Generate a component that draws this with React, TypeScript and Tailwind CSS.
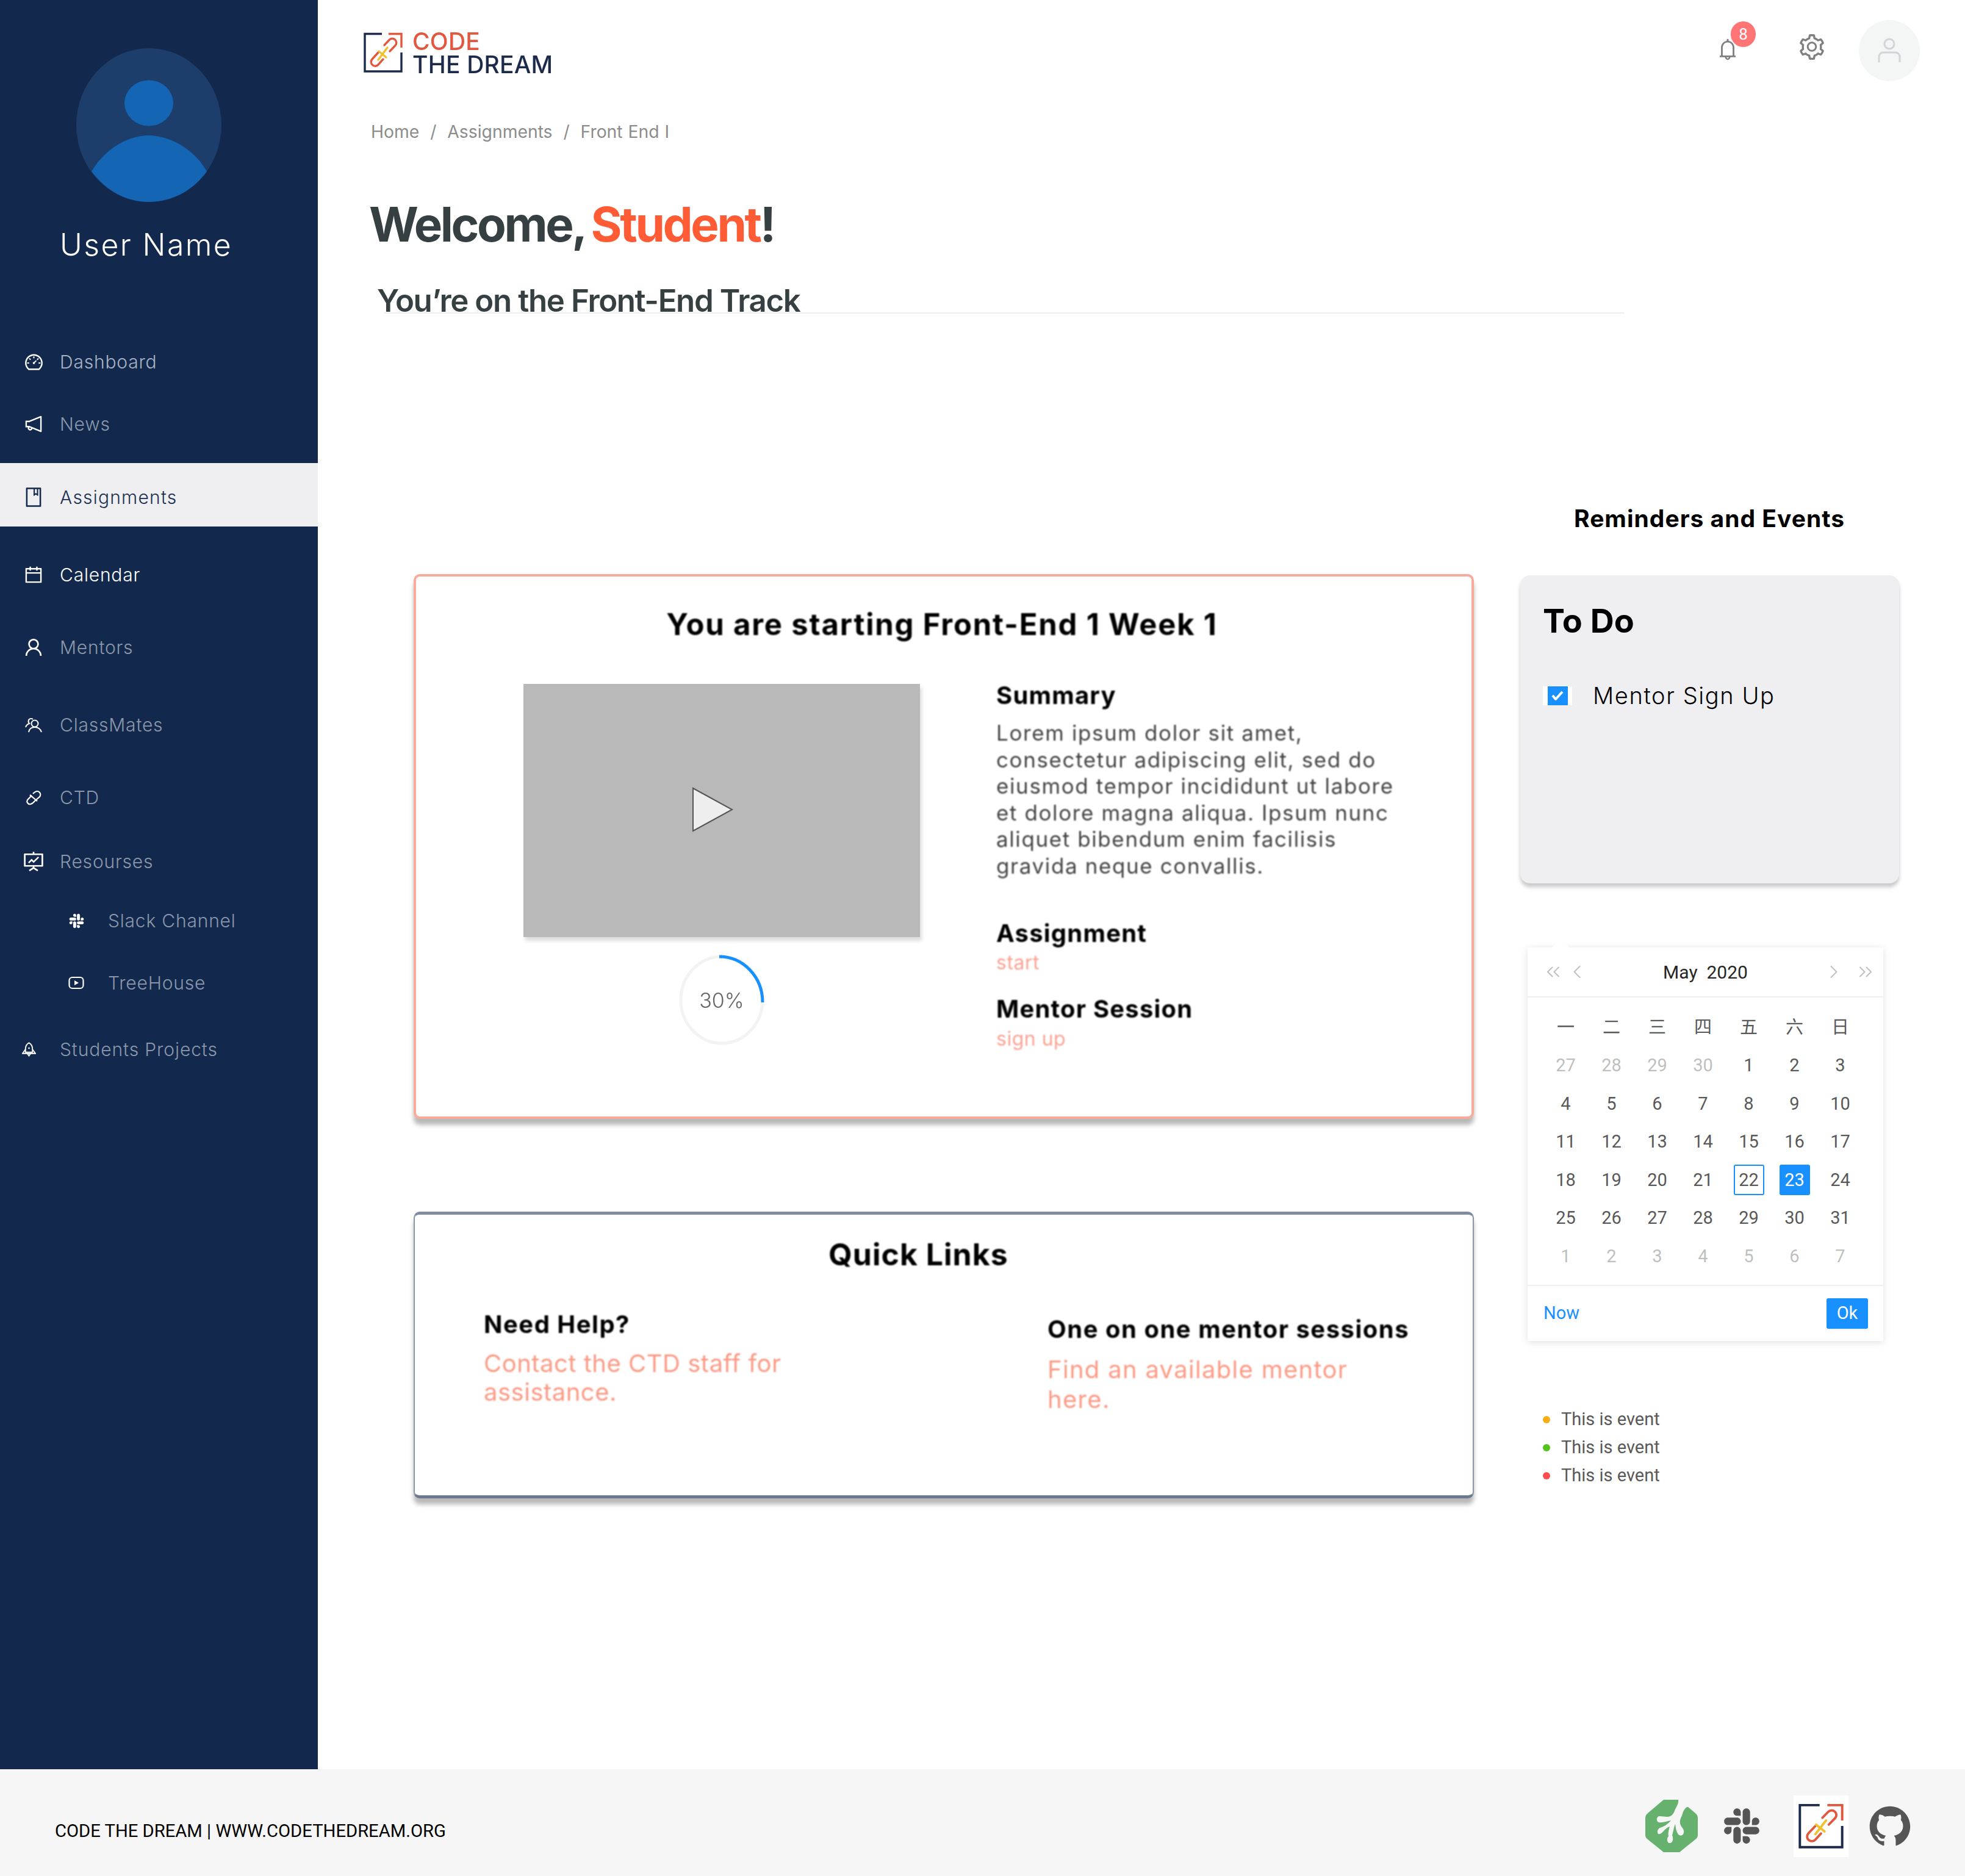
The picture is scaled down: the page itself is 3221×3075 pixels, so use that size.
import React from "react";
import {
  AiOutlineDashboard, AiOutlineNotification, AiOutlineBook, AiOutlineCalendar, AiOutlineUser,
  AiOutlineFundProjectionScreen, AiOutlineSetting, AiFillGithub, AiOutlineBell,
} from "react-icons/ai";
import { FaSlack } from "react-icons/fa";
import { LuChevronLeft, LuChevronRight, LuChevronsLeft, LuChevronsRight } from "react-icons/lu";

const sans = "font-['Inter','Noto_Sans',sans-serif]";
const rob = "font-['Roboto','Noto_Sans_CJK_SC',sans-serif]";

function TeamIcon() {
  return (
    <svg viewBox="0 0 28 26" className="w-[28px] h-[26px] shrink-0" fill="none" stroke="white" strokeWidth="2">
      <circle cx="16" cy="11" r="5.5" />
      <path d="M6 25c1-6 5-8 10-8s9 2 11 8" />
      <path d="M13 4a5 5 0 0 0-7 1c-1 3 0 5 1 6-3 1-5 3-6 6" />
    </svg>
  );
}
function CtdIcon() {
  return (
    <svg viewBox="0 0 28 26" className="w-[28px] h-[26px] shrink-0" fill="none" stroke="white" strokeWidth="2.2">
      <path d="M11 10 5 16c-4 4 0 9 4 8 3 0 5-3 8-6l7-6c3-4 0-9-4-9-3 0-5 2-7 4" />
      <path d="M8 9c4 3 8 7 12 10" />
    </svg>
  );
}
function RocketIcon() {
  return (
    <svg viewBox="0 0 24 26" className="w-[23px] h-[26px] shrink-0" fill="none" stroke="white" strokeWidth="2">
      <path d="M12 2c4 2 6 6 6 11v5H6v-5c0-5 2-9 6-11Z" />
      <path d="M6 13 1 20h22l-5-7M9 20l3 4 3-4" />
      <circle cx="12" cy="11" r="1.4" fill="white" stroke="none" />
    </svg>
  );
}
function TreeHouseNavIcon() {
  return (
    <svg viewBox="0 0 26 24" className="w-[26px] h-[24px] shrink-0" fill="none" stroke="white" strokeWidth="2.2">
      <rect x="1.5" y="3" width="23" height="18" rx="5" />
      <path d="M10 8v8l7-4Z" fill="white" stroke="none" />
    </svg>
  );
}
function LogoMark({ className }: { className: string }) {
  return (
    <svg viewBox="0 0 64 66" className={className} fill="none" preserveAspectRatio="none">
      <path d="M30 2.5H2V64H62V33" stroke="#1c2b4a" strokeWidth="3.4" />
      <path d="M41 2.5H62V25" stroke="#e2573e" strokeWidth="3.4" />
      <path d="M34 21 42 12.500a6.500 6.500 0 0 1 10 9L43 31" stroke="#e2573e" strokeWidth="3.400" strokeLinecap="round" />
      <path d="M24 33 14 44a6.500 6.500 0 0 0 10 9L32 44" stroke="#e2573e" strokeWidth="3.400" strokeLinecap="round" />
      <path d="M24 45 39 25M25 31 37 41" stroke="#efc12f" strokeWidth="3.400" strokeLinecap="round" />
    </svg>
  );
}
function TreeHouseLogo() {
  return (
    <svg viewBox="0 0 86 86" className="w-[86px] h-[86px] shrink-0">
      <path d="M30 0H56L82 22Q86 25 86 30V58Q86 62 82 65L56 86H30L4 65Q0 62 0 58V30Q0 25 4 22Z" fill="#66b16e" />
      <path
        d="M54-1C55 8 50 12 48 18 46 24 42 28 36 28L24 27C18 26 17 36 22 37 30 38 35 35 42 34 36 41 30 44 24 46 18 49 19 58 24 56 30 54 32 46 40 44 38 50 37 56 38 60 34 64 36 72 41 71 46 70 46 62 44 58 46 52 47 44 49 40 50 46 50 50 53 55 55 60 62 60 63 54 64 48 60 46 58 42 55 36 58 30 60 26 62 18 66 10 72 12L62-1Z"
        fill="#f6f6f6"
      />
    </svg>
  );
}

type NavRow = { label: string; icon: React.ReactNode; cls: string; text: string };
const top = "pl-[40px]";
const nav: NavRow[] = [
  { label: "Dashboard", icon: <AiOutlineDashboard size={33} color="white" className="shrink-0" />, cls: `h-[100px] ${top}`, text: "text-[#a9b3c3] ml-[28px]" },
  { label: "News", icon: <AiOutlineNotification size={34} color="white" className="shrink-0" />, cls: `h-[104px] mb-[12px] ${top}`, text: "text-[#8b97ab] ml-[28px]" },
  { label: "Assignments", icon: <AiOutlineBook size={36} color="#12284c" className="shrink-0" />, cls: `h-[104px] pt-[8px] bg-[#efeff2] ${top}`, text: "text-[#1c2f50] ml-[28px] tracking-[1.2px]" },
  { label: "Calendar", icon: <AiOutlineCalendar size={34} color="white" className="shrink-0" />, cls: `h-[158px] ${top}`, text: "text-white ml-[28px]" },
  { label: "Mentors", icon: <AiOutlineUser size={36} color="white" className="shrink-0" />, cls: `h-[80px] ${top}`, text: "text-[#8b97ab] ml-[28px]" },
  { label: "ClassMates", icon: <TeamIcon />, cls: `h-[174px] ${top}`, text: "text-[#8b97ab] ml-[28px] tracking-[0.4px]" },
  { label: "CTD", icon: <CtdIcon />, cls: `h-[64px] ${top}`, text: "text-[#8b97ab] ml-[28px]" },
  { label: "Resourses", icon: <AiOutlineFundProjectionScreen size={38} color="white" className="shrink-0" />, cls: `h-[146px] ${top}`, text: "text-[#8b97ab] ml-[28px] tracking-[0.6px]" },
  { label: "Slack Channel", icon: <FaSlack size={27} color="white" className="shrink-0" />, cls: "h-[48px] pl-[110px]", text: "text-[#8b97ab] ml-[37px]" },
  { label: "TreeHouse", icon: <TreeHouseNavIcon />, cls: "h-[156px] pl-[110px]", text: "text-[#8b97ab] ml-[37px] tracking-[0.6px]" },
  { label: "Students Projects", icon: <RocketIcon />, cls: "h-[62px] pl-[32px]", text: "text-[#8b97ab] ml-[36px] tracking-[0.9px]" },
];

function Sidebar() {
  return (
    <aside className="w-[521px] shrink-0 bg-[#12284c] pt-[79px] flex flex-col">
      <svg viewBox="0 0 238 252" className="ml-[125px] w-[238px] h-[252px]">
        <ellipse cx="119" cy="126" rx="119" ry="126" fill="#1d3e6b" />
        <ellipse cx="119" cy="90" rx="40" ry="37.500" fill="#1565b5" />
        <path d="M25 202C50 160 90 143 119 143S190 160 214 202C190 235 155 252 119 252S50 235 25 202Z" fill="#1565b5" />
      </svg>
      <div className={`${sans} mt-[40px] ml-[98px] h-[60px] leading-[60px] text-[50px] font-light tracking-[2.4px] text-white`}>User Name</div>
      <nav className="mt-[112px] flex flex-col">
        {nav.map((n) => (
          <div key={n.label} className={`flex items-center ${n.cls}`}>
            <span className="w-[30px] flex justify-center shrink-0">{n.icon}</span>
            <span className={`${sans} text-[30px] font-light tracking-[0.8px] whitespace-nowrap ${n.text}`}>{n.label}</span>
          </div>
        ))}
      </nav>
    </aside>
  );
}

function Header() {
  return (
    <header className="h-[195px] flex justify-between pl-[75px] pr-[74px]">
      <div className="flex pt-[53px] blur-[0.5px]">
        <LogoMark className="w-[64px] h-[66px]" />
        <div className={`${sans} ml-[16px] -mt-[4px] font-medium text-[39px] leading-[38px] tracking-[0.2px]`}>
          <div className="text-[#e2573e]">CODE</div>
          <div className="text-[#1c2b4a]">THE DREAM</div>
        </div>
      </div>
      <div className="flex pt-[33px]">
        <div className="relative mt-[28px] mr-[94px] w-[40px] h-[40px]">
          <AiOutlineBell size={40} color="#7f7f7f" />
          <span className={`${rob} absolute left-[25px] top-[-26px] w-[41px] h-[42px] rounded-full bg-[#ff7575] text-white text-[26px] flex items-center justify-center`}>8</span>
        </div>
        <div className="mt-[20px] mr-[53px]">
          <AiOutlineSetting size={48} color="#7f7f7f" />
        </div>
        <div className="w-[100px] h-[100px] rounded-full bg-[#f4f5f5] flex items-center justify-center">
          <svg viewBox="0 0 40 42" className="w-[40px] h-[42px]" fill="none" stroke="#d0d6d8" strokeWidth="3">
            <circle cx="20" cy="10" r="8" />
            <path d="M3 40V31a7 7 0 0 1 7-7h20a7 7 0 0 1 7 7v9" />
          </svg>
        </div>
      </div>
    </header>
  );
}

function Card1() {
  return (
    <section className="h-[893px] border-[4px] border-[#f9ab9b] rounded-[10px] bg-white shadow-[0_10px_7px_rgba(0,0,0,0.28)]">
      <div className={`${sans} blur-[1px] pt-[47px] pr-[6px] h-[110px] text-center text-[49px] leading-[64px] font-bold tracking-[1.8px] text-black`}>You are starting Front-End 1 Week 1</div>
      <div className="mt-[66px] flex">
        <div className="ml-[176px] w-[650px] flex flex-col items-center">
          <div className="w-[650px] h-[415px] bg-[#b9b9b9] shadow-[3px_6px_6px_rgba(0,0,0,0.14)] flex items-center justify-center">
            <svg viewBox="0 0 70 76" className="w-[70px] h-[76px] mr-[30px] mb-[4px] blur-[0.5px]">
              <path d="M3 3 67 38 3 73Z" fill="#eeeeee" stroke="#555" strokeWidth="2" />
            </svg>
          </div>
          <div className="relative mt-[29px] w-[140px] h-[148px] blur-[0.5px]">
            <svg viewBox="0 0 140 148" className="w-[140px] h-[148px]" fill="none">
              <ellipse cx="70" cy="74" rx="67" ry="71" stroke="#f3f3f3" strokeWidth="5" />
              <path d="M66 3C105 3 137 36 137 78" stroke="#1890ff" strokeWidth="5" />
            </svg>
            <span className={`${sans} absolute inset-0 flex items-center justify-center text-[34px] text-[#666] font-light`}>30%</span>
          </div>
        </div>
        <div className={`${sans} ml-[125px] blur-[1px]`}>
          <div className="h-[38px] leading-[38px] text-[40px] font-bold tracking-[1.2px] text-black">Summary</div>
          <p className="mt-[21px] text-[35px] leading-[43.5px] tracking-[1.6px] text-[#444] whitespace-nowrap">
            Lorem ipsum dolor sit amet,<br />
            consectetur adipiscing elit, sed do<br />
            eiusmod tempor incididunt ut labore<br />
            et dolore magna aliqua. Ipsum nunc<br />
            aliquet bibendum enim facilisis<br />
            gravida neque convallis.
          </p>
          <div className="mt-[69px] h-[40px] leading-[40px] text-[40px] font-bold tracking-[1.2px] text-black">Assignment</div>
          <div className="mt-[10px] h-[36px] leading-[36px] text-[32px] tracking-[0.5px] text-[#f9a392]">start</div>
          <div className="mt-[38px] h-[40px] leading-[40px] text-[40px] font-bold tracking-[1.2px] text-black">Mentor Session</div>
          <div className="mt-[11px] h-[36px] leading-[36px] text-[32px] tracking-[0.5px] text-[#f9a392]">sign up</div>
        </div>
      </div>
    </section>
  );
}

function Card2() {
  return (
    <section className={`${sans} mt-[152px] h-[470px] border-x-2 border-y-[5px] border-x-[#8a95a8] border-t-[#7f8ba0] border-b-[#6b7890] rounded-[10px] bg-white shadow-[0_10px_7px_rgba(0,0,0,0.28)]`}>
      <div className="blur-[1px]">
        <div className="pt-[30px] pl-[678px] h-[100px] leading-[70px] text-[50px] font-bold tracking-[1px] text-black">Quick Links</div>
        <div className="mt-[58px] flex">
          <div className="ml-[113px] w-[924px]">
            <div className="h-[44px] leading-[44px] text-[40px] font-bold tracking-[1.5px] text-black">Need Help?</div>
            <div className="mt-[18px] text-[40px] leading-[47px] tracking-[0.5px] text-[#fa9a85]">Contact the CTD staff for<br />assistance.</div>
          </div>
          <div className="pt-[8px]">
            <div className="h-[44px] leading-[44px] text-[40px] font-bold tracking-[1.5px] text-black whitespace-nowrap">One on one mentor sessions</div>
            <div className="mt-[19px] text-[40px] leading-[49px] tracking-[1.3px] text-[#fa9a85]">Find an available mentor<br />here.</div>
          </div>
        </div>
      </div>
    </section>
  );
}

function ToDo() {
  return (
    <section className={`${sans} mt-[2px] h-[505px] w-[621px] rounded-[16px] bg-[#efeff1] shadow-[0_6px_6px_rgba(0,0,0,0.22)] pl-[37px] pt-[42px]`}>
      <div className="h-[66px] leading-[66px] text-[54px] font-bold text-black">To Do</div>
      <div className="mt-[66px] flex items-center h-[46px]">
        <div className="w-[48px] h-[31px] bg-white flex justify-center">
          <div className="w-[33px] h-[31px] bg-[#1890ff] flex items-center justify-center">
            <svg viewBox="0 0 20 16" className="w-[20px] h-[16px]" fill="none" stroke="white" strokeWidth="4"><path d="M2 8l5 6 11-12" /></svg>
          </div>
        </div>
        <span className="ml-[34px] text-[38px] font-light tracking-[1.6px] text-black">Mentor Sign Up</span>
      </div>
    </section>
  );
}

const weekdays = ["一", "二", "三", "四", "五", "六", "日"];
const prev = [27, 28, 29, 30];
const month = Array.from({ length: 31 }, (_, i) => i + 1);
const next = [1, 2, 3, 4, 5, 6, 7];

function Calendar() {
  const cell = "h-[62.5px] flex items-center justify-center";
  return (
    <section className={`${rob} relative mt-[105px] ml-[12px] w-[583px] h-[645px] bg-white shadow-[0_2px_12px_rgba(0,0,0,0.12)] text-[29px]`}>
      <span className="absolute left-[40px] top-[-13px] w-0 h-0 border-x-[14px] border-x-transparent border-b-[13px] border-b-white"></span>
      <div className="h-[82px] border-b-2 border-[#f0f0f0] flex items-center justify-between pl-[24px] pr-[11px] text-[#bfbfbf]">
        <div className="flex items-center gap-[3px]">
          <LuChevronsLeft size={36} strokeWidth={1.3} />
          <LuChevronLeft size={36} strokeWidth={1.3} />
        </div>
        <span className="text-[#262626] text-[30px]">May&nbsp;&nbsp;2020</span>
        <div className="flex items-center gap-[16px]">
          <LuChevronRight size={36} strokeWidth={1.3} />
          <LuChevronsRight size={36} strokeWidth={1.3} />
        </div>
      </div>
      <div className="h-[473px] pt-[18px] pl-[25px] pr-[33px] border-b-2 border-[#f0f0f0] grid grid-cols-7 content-start">
        {weekdays.map((d) => <div key={d} className={`${cell} text-[#595959]`}>{d}</div>)}
        {prev.map((d) => <div key={`p${d}`} className={`${cell} text-[#bfbfbf]`}>{d}</div>)}
        {month.map((d) => (
          <div key={d} className={`${cell} text-[#595959]`}>
            {d === 22 ? <span className="w-[50px] h-[50px] rounded-[3px] border-2 border-[#1890ff] flex items-center justify-center">{d}</span>
              : d === 23 ? <span className="w-[50px] h-[50px] rounded-[3px] bg-[#1890ff] text-white flex items-center justify-center">{d}</span>
              : d}
          </div>
        ))}
        {next.map((d) => <div key={`n${d}`} className={`${cell} text-[#bfbfbf]`}>{d}</div>)}
      </div>
      <div className="h-[90px] flex items-center justify-between pl-[26px] pr-[25px]">
        <span className="text-[#1890ff]">Now</span>
        <span className="w-[68px] h-[50px] rounded-[3px] bg-[#1890ff] text-white flex items-center justify-center shadow-[0_2px_0_rgba(0,0,0,0.05)]">Ok</span>
      </div>
    </section>
  );
}

function Events() {
  const rows = ["bg-[#faad14]", "bg-[#52c41a]", "bg-[#ff4d4f]"];
  return (
    <ul className={`${rob} mt-[106px] pl-[37px] text-[#595959] text-[29px]`}>
      {rows.map((c) => (
        <li key={c} className="h-[46px] flex items-center">
          <span className={`w-[12px] h-[12px] rounded-full ${c}`}></span>
          <span className="ml-[18px]">This is event</span>
        </li>
      ))}
    </ul>
  );
}

function Main() {
  return (
    <main className="flex-1 flex flex-col bg-white">
      <Header />
      <div className={`${sans} h-[40px] leading-[42px] pl-[87px] text-[28.300px] [word-spacing:1px] text-[#8c8c8c] whitespace-pre`}>Home  /  Assignments  /  Front End I</div>
      <h1 className={`${sans} mt-[83px] pl-[84px] h-[100px] leading-[100px] text-[78px] font-bold tracking-[-3.4px] text-[#363f42]`}>
        Welcome, <span className="ml-[-4px] text-[#ff5c35]">Student</span>!
      </h1>
      <div className="mt-[45px] ml-[108px] w-[2033px] h-[51px] border-b-2 border-[#eeeeee]">
        <h2 className={`${sans} -ml-[11px] h-[60px] leading-[60px] text-[51px] font-semibold tracking-[-1.4px] text-[#363f42]`}>You’re on the Front-End Track</h2>
      </div>
      <div className={`${sans} mt-[306px] pl-[2059px] h-[60px] leading-[60px] text-[39px] font-bold tracking-[1px] text-black`}>Reminders and Events</div>
      <div className="mt-[61px] pl-[157px] flex">
        <div className="w-[1738px]">
          <Card1 />
          <Card2 />
        </div>
        <div className="ml-[76px] w-[622px]">
          <ToDo />
          <Calendar />
          <Events />
        </div>
      </div>
    </main>
  );
}

function Footer() {
  return (
    <footer className="h-[175px] bg-[#f6f6f6] flex items-center justify-between pl-[90px] pr-[85px] pt-[11px]">
      <span className={`${rob} text-[29.200px] text-black pt-[18px]`}>CODE THE DREAM | WWW.CODETHEDREAM.ORG</span>
      <div className="flex items-center">
        <TreeHouseLogo />
        <FaSlack size={66} color="#555" className="ml-[39px]" />
        <div className="ml-[52px] w-[90px] h-[101px] bg-white flex items-center justify-center blur-[0.4px]">
          <LogoMark className="w-[74px] h-[74px]" />
        </div>
        <AiFillGithub size={76} color="#555" className="ml-[30px]" />
      </div>
    </footer>
  );
}

export default function App() {
  return (
    <div className="w-[3221px] h-[3075px] flex flex-col overflow-hidden bg-white">
      <div className="h-[2900px] flex">
        <Sidebar />
        <Main />
      </div>
      <Footer />
    </div>
  );
}
